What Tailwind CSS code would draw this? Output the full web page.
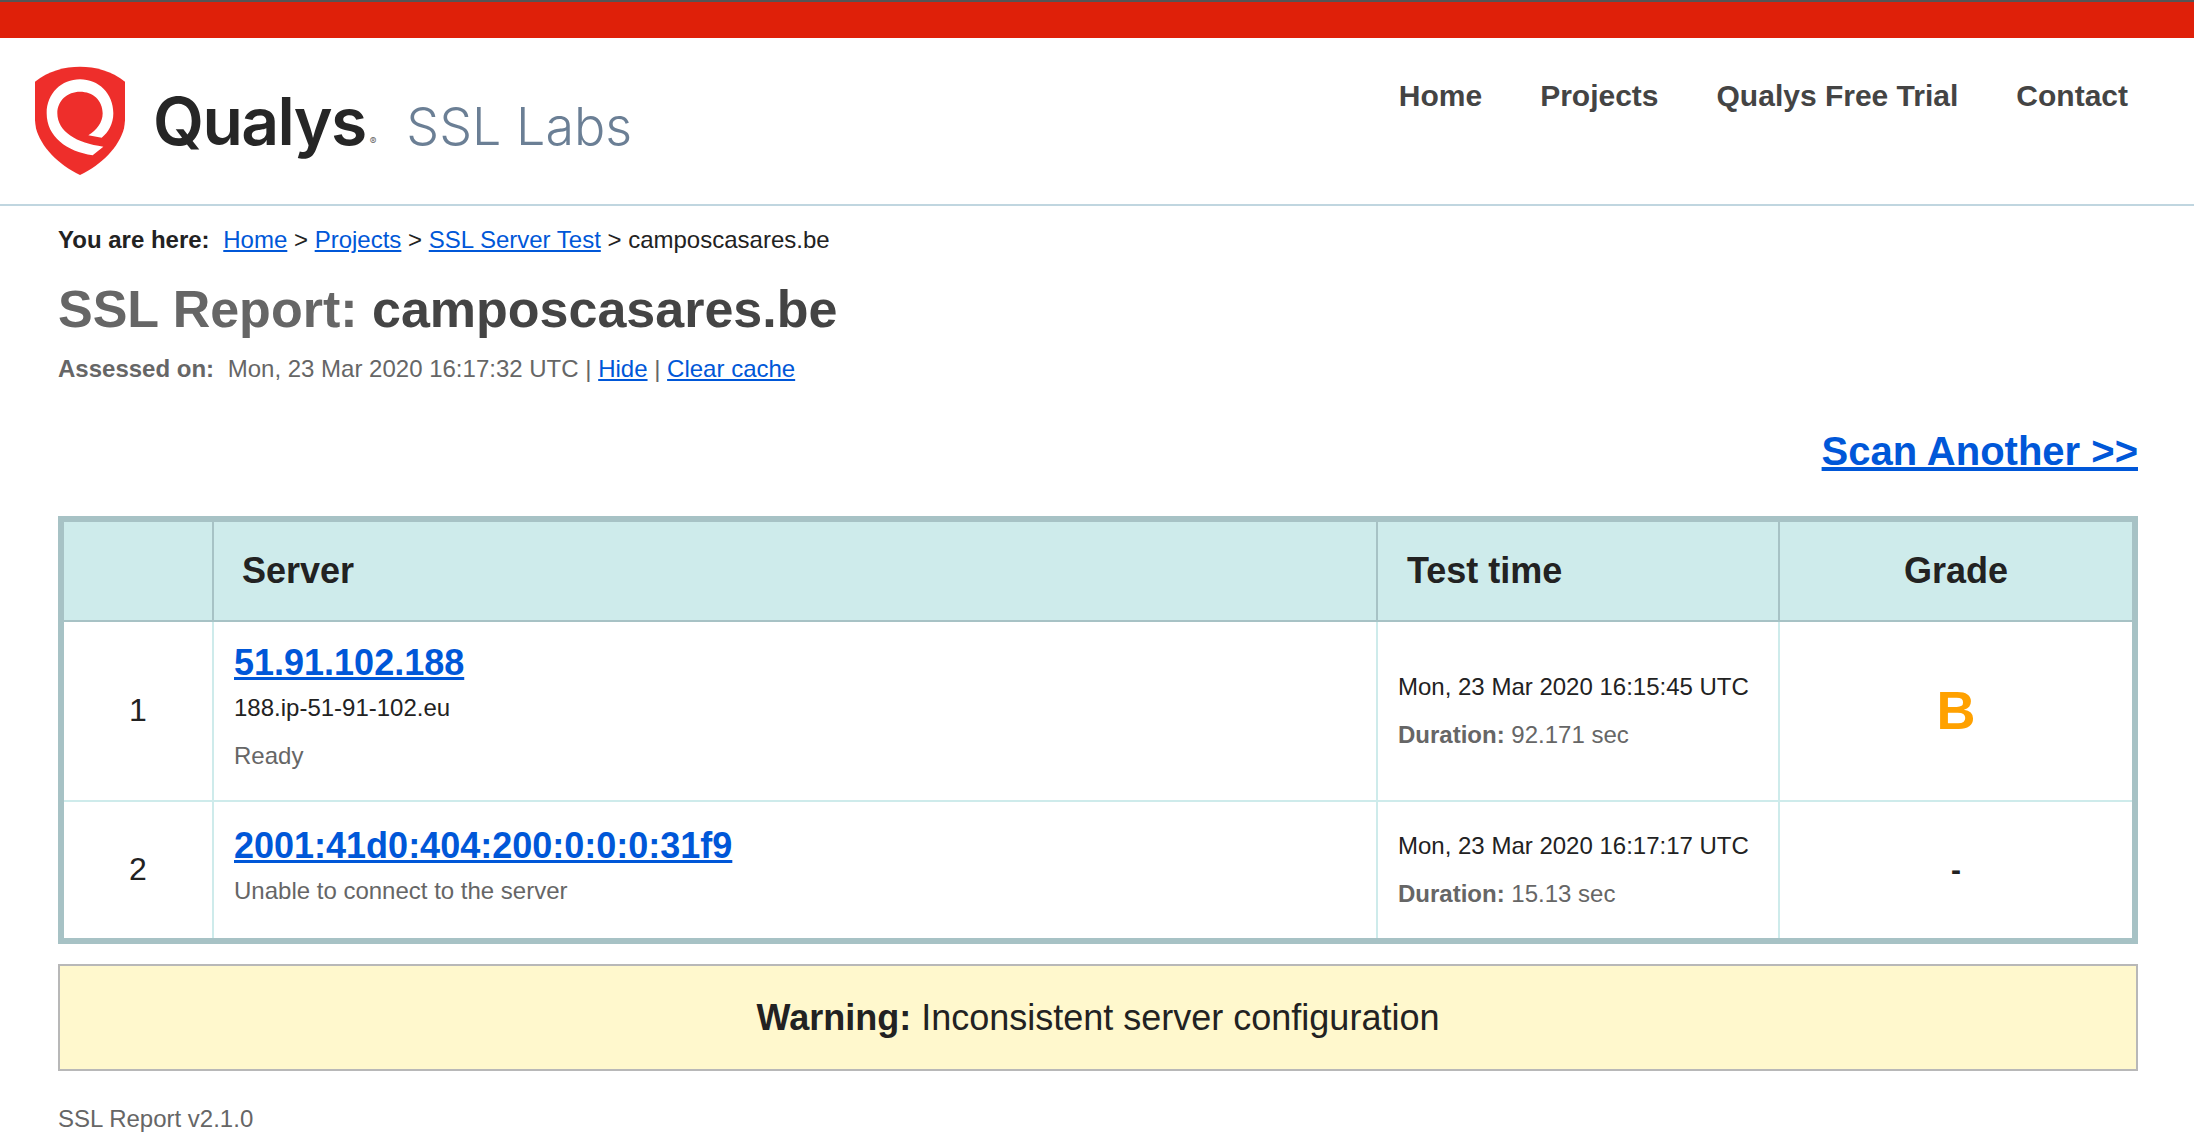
<!DOCTYPE html>
<html lang="en">
  <head>
    <meta charset="UTF-8" />
    <meta name="viewport" content="width=device-width, initial-scale=1.0" />
    <script src="https://cdn.jsdelivr.net/npm/@tailwindcss/browser@4"></script>
    <title>SSL Server Test: camposcasares.be</title>
  </head>
  <body class="bg-white font-['Liberation_Sans',Arial,sans-serif] text-[24px] leading-[36px] text-[#222]">
    <!-- top bar -->
    <div class="h-[38px] bg-[#df2009] border-t-2 border-[#555]"></div>

    <!-- header -->
    <header class="flex h-[168px] border-b-2 border-[#c0d6e0]">
      <a href="#" class="flex items-start pl-[35px] pt-[28px]">
        <svg xmlns="http://www.w3.org/2000/svg" viewBox="45 48 270 327" width="90" height="109" class="shrink-0">
          <path fill="#ee2e2b" d="M45 95C85 62 135 50 180 50C225 50 275 62 315 95C318 150 318 200 312 235C298 290 245 345 180 375C115 345 62 290 48 235C42 200 42 150 45 95Z"></path>
          <path fill="#fff" d="M218 316C140 305 80 260 80 190C80 130 125 88 180 88C235 88 280 130 280 190C280 222 265 248 245 263L205 256C230 240 248 218 248 190C248 150 218 125 180 125C142 125 112 152 112 190C112 245 170 280 250 290Z"></path>
        </svg>
        <div class="flex items-baseline ml-[28px] mt-[19px] font-['Inter',sans-serif]">
          <span class="text-[66px] leading-[72px] font-semibold tracking-[-1.6px] text-[#262626]">Qualys</span>
          <span class="text-[10px] leading-[10px] text-[#666] ml-[4px]">®</span>
          <span class="text-[52px] leading-[72px] font-light text-[#6b7f95] ml-[30px]">SSL Labs</span>
        </div>
      </a>
      <nav class="ml-auto flex gap-[58px] pr-[66px] pt-[40px] text-[30px] leading-[36px] font-bold text-[#444]">
        <a href="#">Home</a>
        <a href="#">Projects</a>
        <a href="#">Qualys Free Trial</a>
        <a href="#">Contact</a>
      </nav>
    </header>

    <main class="px-[58px] pt-[16px] pr-[56px]">
      <div>
        <b class="mr-[7px]">You are here:</b>
        <a href="#" class="text-[#0057d8] underline">Home</a> &gt;
        <a href="#" class="text-[#0057d8] underline">Projects</a> &gt;
        <a href="#" class="text-[#0057d8] underline">SSL Server Test</a> &gt; camposcasares.be
      </div>

      <h1 class="mt-[21px] text-[52px] leading-[60px] font-bold text-[#666]">
        SSL Report: <span class="text-[#444]">camposcasares.be</span>
      </h1>

      <div class="mt-[12px] text-[#666]">
        <b class="mr-[7px]">Assessed on:</b>
        Mon, 23 Mar 2020 16:17:32 UTC |
        <a href="#" class="text-[#0057d8] underline">Hide</a> |
        <a href="#" class="text-[#0057d8] underline">Clear cache</a>
      </div>

      <div class="mt-[39px] text-right text-[40px] leading-[50px] font-bold">
        <a href="#" class="text-[#0057d8] underline">Scan Another &gt;&gt;</a>
      </div>

      <!-- results table -->
      <table class="mt-[40px] w-[2080px] table-fixed border-separate border-spacing-0 border-[6px] border-[#a7c2c5]">
        <colgroup>
          <col class="w-[150px]" />
          <col class="w-[1164px]" />
          <col class="w-[402px]" />
          <col />
        </colgroup>
        <thead class="bg-[#ceebeb] text-[36px] font-bold">
          <tr class="h-[100px]">
            <th class="border-r-2 border-b-2 border-[#a7c2c5]"></th>
            <th class="border-r-2 border-b-2 border-[#a7c2c5] pl-[28px] text-left font-bold">Server</th>
            <th class="border-r-2 border-b-2 border-[#a7c2c5] pl-[29px] text-left font-bold">Test time</th>
            <th class="border-b-2 border-[#a7c2c5] text-center font-bold">Grade</th>
          </tr>
        </thead>
        <tbody>
          <tr class="h-[180px]">
            <td class="border-r-2 border-b-2 border-[#ceebeb] pb-[2px] text-center text-[32px]">1</td>
            <td class="border-r-2 border-b-2 border-[#ceebeb] pl-[20px] align-top pt-[17px]">
              <a href="#" class="block text-[36px] leading-[48px] font-bold text-[#0057d8] underline">51.91.102.188</a>
              <div class="leading-[42px]">188.ip-51-91-102.eu</div>
              <div class="mt-[9px] text-[#666]">Ready</div>
            </td>
            <td class="border-r-2 border-b-2 border-[#ceebeb] pl-[20px]">
              <div>Mon, 23 Mar 2020 16:15:45 UTC</div>
              <div class="mt-[12px] text-[#666]"><b>Duration:</b> 92.171 sec</div>
            </td>
            <td class="border-b-2 border-[#ceebeb] pb-[2px] text-center text-[54px] font-bold text-[#ffa100]">B</td>
          </tr>
          <tr class="h-[136px]">
            <td class="border-r-2 border-[#ceebeb] pb-[2px] text-center text-[32px]">2</td>
            <td class="border-r-2 border-[#ceebeb] pl-[20px] align-top pt-[20px]">
              <a href="#" class="block text-[36px] leading-[48px] font-bold text-[#0057d8] underline">2001:41d0:404:200:0:0:0:31f9</a>
              <div class="leading-[41px] text-[#666]">Unable to connect to the server</div>
            </td>
            <td class="border-r-2 border-[#ceebeb] pl-[20px]">
              <div>Mon, 23 Mar 2020 16:17:17 UTC</div>
              <div class="mt-[12px] text-[#666]"><b>Duration:</b> 15.13 sec</div>
            </td>
            <td class="text-center text-[30px] font-bold">-</td>
          </tr>
        </tbody>
      </table>

      <div class="mt-[20px] flex h-[107px] items-center justify-center border-2 border-[#b8b8b8] bg-[#fff8cd] text-[36px]">
        <p><b>Warning:</b> Inconsistent server configuration</p>
      </div>

      <div class="mt-[30px] text-[#666]">SSL Report v2.1.0</div>
    </main>
  </body>
</html>
